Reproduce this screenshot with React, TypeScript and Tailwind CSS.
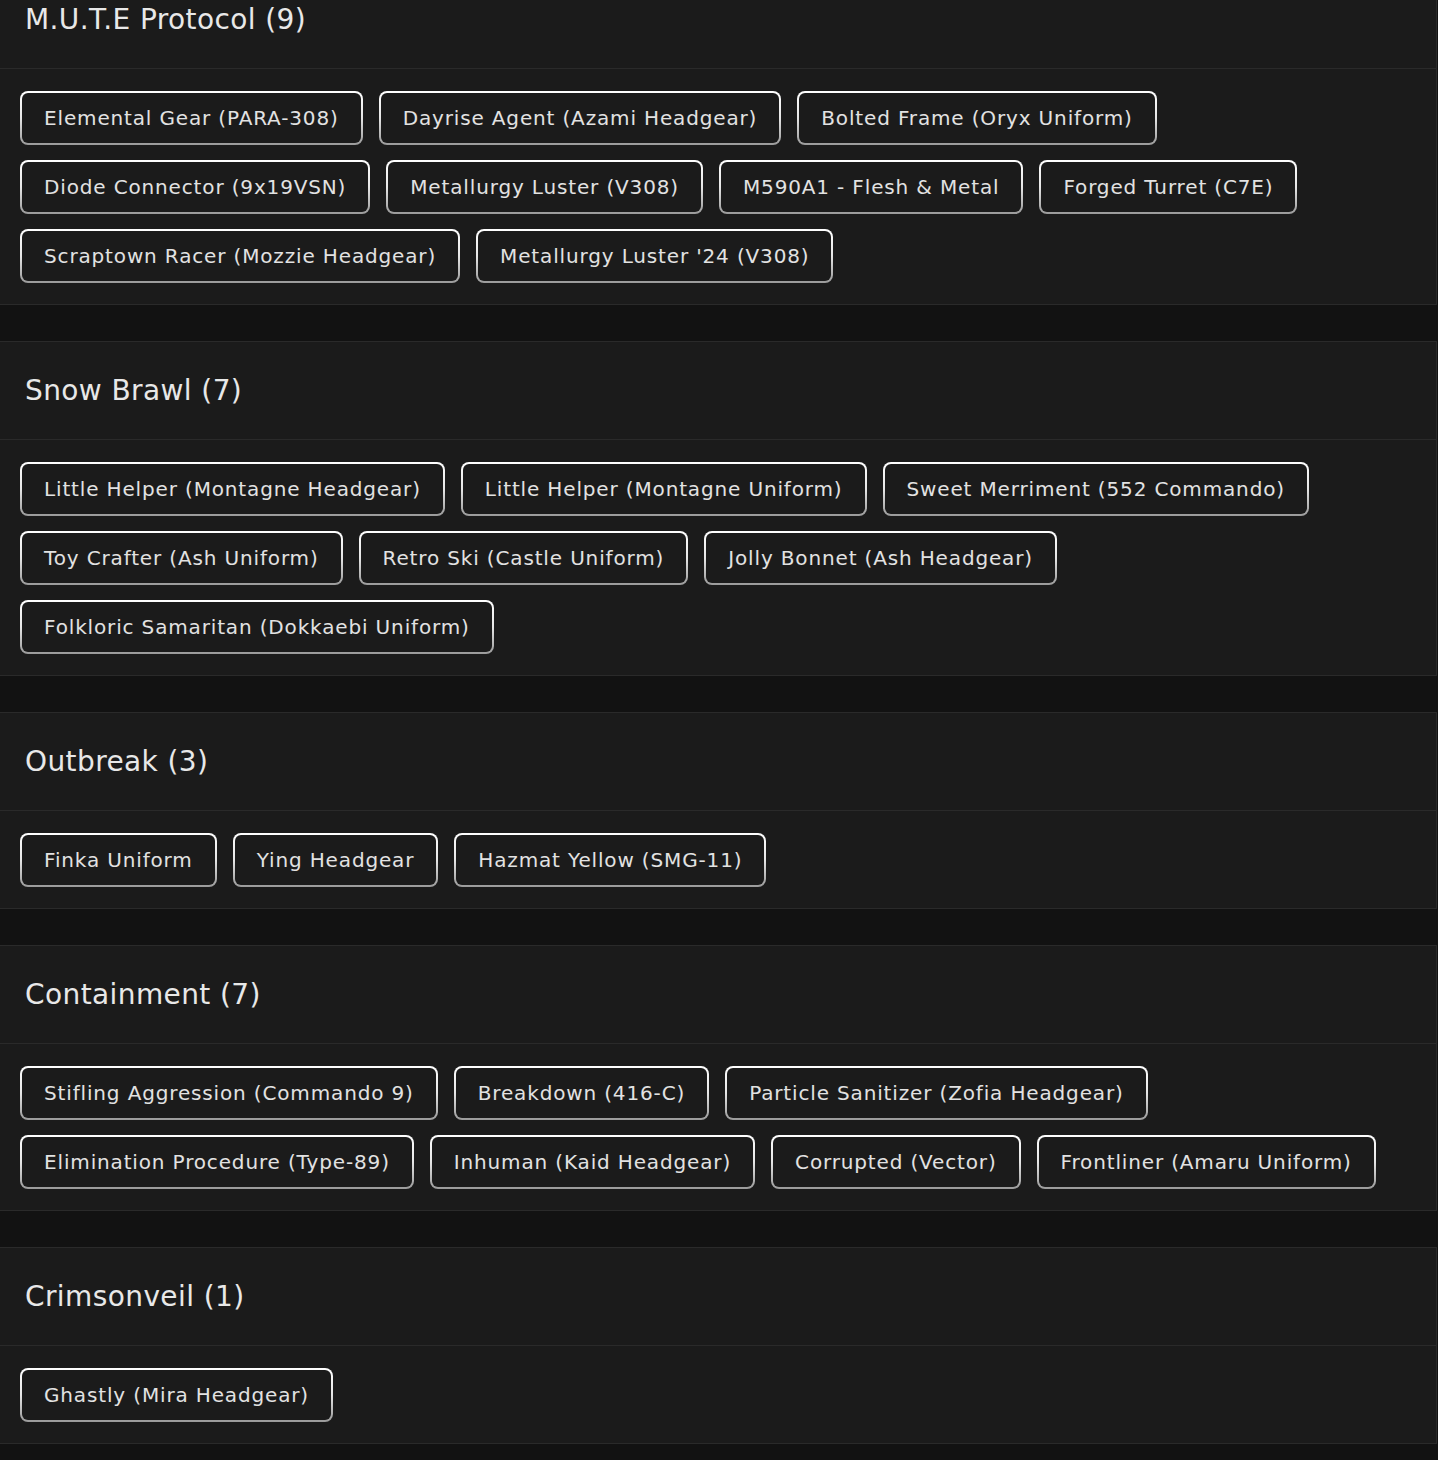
import React from 'react';

interface Collection {
  name: string;
  items: string[];
}

const collections: Collection[] = [
  {
    name: 'M.U.T.E Protocol',
    items: [
      'Elemental Gear (PARA-308)',
      'Dayrise Agent (Azami Headgear)',
      'Bolted Frame (Oryx Uniform)',
      'Diode Connector (9x19VSN)',
      'Metallurgy Luster (V308)',
      'M590A1 - Flesh & Metal',
      'Forged Turret (C7E)',
      'Scraptown Racer (Mozzie Headgear)',
      "Metallurgy Luster '24 (V308)",
    ],
  },
  {
    name: 'Snow Brawl',
    items: [
      'Little Helper (Montagne Headgear)',
      'Little Helper (Montagne Uniform)',
      'Sweet Merriment (552 Commando)',
      'Toy Crafter (Ash Uniform)',
      'Retro Ski (Castle Uniform)',
      'Jolly Bonnet (Ash Headgear)',
      'Folkloric Samaritan (Dokkaebi Uniform)',
    ],
  },
  {
    name: 'Outbreak',
    items: ['Finka Uniform', 'Ying Headgear', 'Hazmat Yellow (SMG-11)'],
  },
  {
    name: 'Containment',
    items: [
      'Stifling Aggression (Commando 9)',
      'Breakdown (416-C)',
      'Particle Sanitizer (Zofia Headgear)',
      'Elimination Procedure (Type-89)',
      'Inhuman (Kaid Headgear)',
      'Corrupted (Vector)',
      'Frontliner (Amaru Uniform)',
    ],
  },
  {
    name: 'Crimsonveil',
    items: ['Ghastly (Mira Headgear)'],
  },
];

const Chip: React.FC<{ label: string }> = ({ label }) => (
  <div className="rounded-[8px] bg-gradient-to-b from-white via-[#e6e6e6] to-[#9a9a9a] p-[2px]">
    <div className="flex h-[50px] items-center rounded-[6px] bg-[#1b1b1b] px-[22px] text-[20px] tracking-[0.85px] text-[#e2e2e2]">
      {label}
    </div>
  </div>
);

export default function App() {
  return (
    <div
      className="min-h-[1460px] overflow-hidden bg-[#121212]"
      style={{ fontFamily: '"DejaVu Sans", "Liberation Sans", sans-serif' }}
    >
      <div className="-mt-[30px] flex flex-col gap-9 pr-[1px]">
        {collections.map((c) => (
          <section key={c.name} className="border border-l-0 border-[#2a2a2a] bg-[#1b1b1b]">
            <header className="flex h-[98px] items-center border-b border-[#2a2a2a] px-[25px]">
              <h2 className="text-[28px] tracking-[0.4px] text-[#e8e8e8]">
                {c.name} ({c.items.length})
              </h2>
            </header>
            <div className="flex flex-wrap gap-x-4 gap-y-[15px] px-5 pb-[21px] pt-[22px]">
              {c.items.map((item) => (
                <Chip key={item} label={item} />
              ))}
            </div>
          </section>
        ))}
      </div>
    </div>
  );
}
